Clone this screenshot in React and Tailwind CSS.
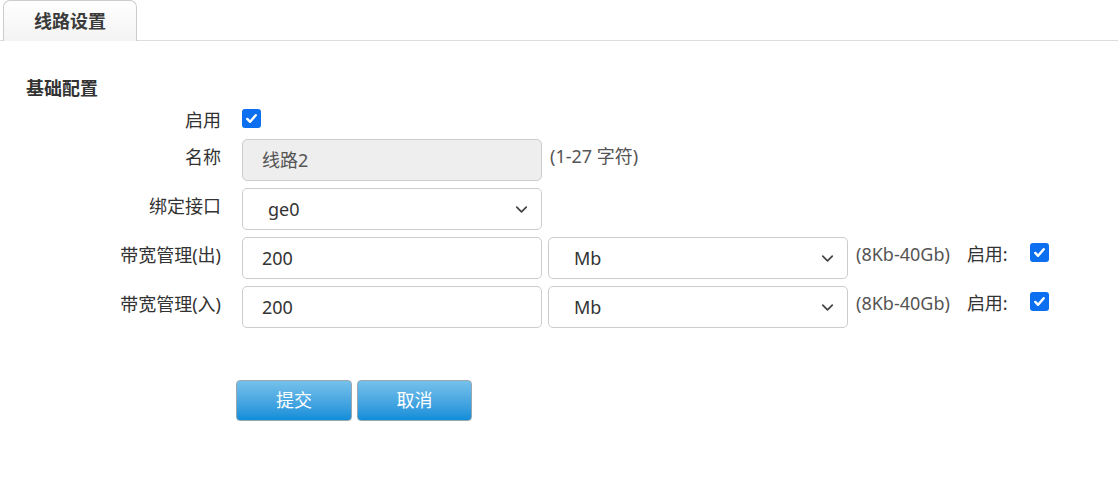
import { ChevronDown } from "lucide-react";

const font = { fontFamily: '"Noto Sans", "Noto Sans CJK SC", sans-serif' };

const Check = () => (
  <span className="flex h-[19px] w-[19px] items-center justify-center rounded-[3px] bg-[#0b6fef]">
    <svg viewBox="0 0 16 16" className="h-[15px] w-[15px]" fill="none" stroke="white" strokeWidth="2.6" strokeLinecap="round" strokeLinejoin="round">
      <path d="M3.5 8.5l3 3 6-7" />
    </svg>
  </span>
);

const Select = ({ value }) => (
  <div className="flex h-[42px] w-[300px] items-center justify-between rounded-[5px] border border-[#ccc] bg-white pl-[25px] pr-[10px] text-[18px] text-[#333]">
    <span>{value}</span>
    <ChevronDown className="h-[19px] w-[19px] text-[#444]" strokeWidth={2.2} />
  </div>
);

const Input = ({ value, disabled }) => (
  <div
    className={`flex h-[42px] w-[300px] items-center rounded-[5px] border border-[#ccc] pl-[19px] text-[18px] ${
      disabled ? "bg-[#eee] text-[#555]" : "bg-white text-[#333]"
    }`}
  >
    {value}
  </div>
);

const Row = ({ label, children, className = "", labelPt = "pt-[6px]" }) => (
  <div className={`flex ${className}`}>
    <div className={`w-[221px] shrink-0 text-right text-[18px] leading-[24px] text-[#333] ${labelPt}`}>{label}</div>
    <div className="ml-[21px] flex items-start gap-[6px]">{children}</div>
  </div>
);

const BandwidthRow = ({ label, className }) => (
  <Row label={label} className={className}>
    <Input value="200" />
    <Select value="Mb" />
    <span className="pl-[2px] pt-[5px] text-[18px] leading-[24px] text-[#555]">(8Kb-40Gb)</span>
    <span className="ml-[11px] pt-[5px] text-[18px] leading-[24px] text-[#333]">启用:</span>
    <span className="ml-[16px] pt-[6px]">
      <Check />
    </span>
  </Row>
);

export default function App() {
  return (
    <div className="h-[487px] w-[1118px] bg-white" style={font}>
      <div className="flex h-[41px] border-b border-[#ddd] pl-[3px]">
        <div className="flex h-[41px] w-[134px] items-center justify-center rounded-t-[7px] border border-b-0 border-[#ccc] bg-gradient-to-b from-white to-[#f3f3f3] text-[18px] font-bold text-[#3a3a3a]">
          线路设置
        </div>
      </div>

      <div className="pl-[26px] pt-[35px] text-[18px] font-bold leading-[24px] text-[#333]">基础配置</div>

      <div className="mt-[-1px] flex flex-col">
        <Row label="启用" className="h-[30px]" labelPt="pt-[9px]">
          <span className="pt-[10px]">
            <Check />
          </span>
        </Row>
        <Row label="名称" className="mt-[10px]">
          <Input value="线路2" disabled />
          <span className="pl-[2px] pt-[5px] text-[18px] leading-[24px] text-[#555]">(1-27 字符)</span>
        </Row>
        <Row label="绑定接口" className="mt-[7px]">
          <Select value="ge0" />
        </Row>
        <BandwidthRow label="带宽管理(出)" className="mt-[7px]" />
        <BandwidthRow label="带宽管理(入)" className="mt-[7px]" />
      </div>

      <div className="ml-[236px] mt-[52px] flex gap-[5px]">
        <button className="h-[41px] w-[116px] rounded-[4px] border border-[#9aa7b0] bg-gradient-to-b from-[#74c1ea] to-[#098ed9] text-[18px] text-white">
          提交
        </button>
        <button className="h-[41px] w-[115px] rounded-[4px] border border-[#9aa7b0] bg-gradient-to-b from-[#74c1ea] to-[#098ed9] text-[18px] text-white">
          取消
        </button>
      </div>
    </div>
  );
}
